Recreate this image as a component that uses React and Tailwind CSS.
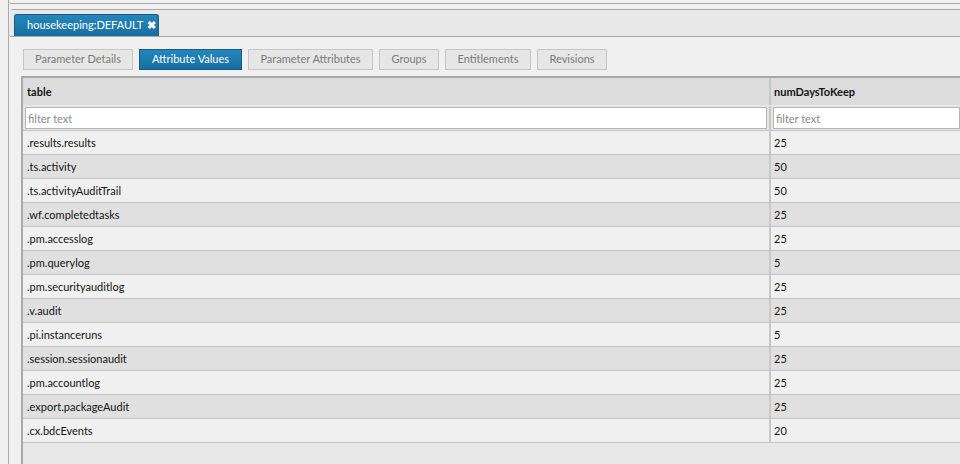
const tabs = [
  { label: 'Parameter Details', w: 'w-[110px]' },
  { label: 'Attribute Values', w: 'w-[103px]', active: true },
  { label: 'Parameter Attributes', w: 'w-[125px]' },
  { label: 'Groups', w: 'w-[60px]' },
  { label: 'Entitlements', w: 'w-[86px]' },
  { label: 'Revisions', w: 'w-[70px]' },
];

const rows = [
  ['.results.results', '25'],
  ['.ts.activity', '50'],
  ['.ts.activityAuditTrail', '50'],
  ['.wf.completedtasks', '25'],
  ['.pm.accesslog', '25'],
  ['.pm.querylog', '5'],
  ['.pm.securityauditlog', '25'],
  ['.v.audit', '25'],
  ['.pi.instanceruns', '5'],
  ['.session.sessionaudit', '25'],
  ['.pm.accountlog', '25'],
  ['.export.packageAudit', '25'],
  ['.cx.bdcEvents', '20'],
];

const font = { fontFamily: 'Lato, "Open Sans", sans-serif' };

export default function App() {
  return (
    <div
      className="w-[960px] h-[464px] overflow-hidden bg-[#f0f0f0] flex text-[11px] text-[#141414]"
      style={font}
    >
      <div className="w-[8px] shrink-0" />
      <div className="flex-1 flex flex-col border-l border-[#a9a9a9]">
        {/* bottom of the panel above */}
        <div className="h-[4px] border-b border-[#a9a9a9] rounded-bl-[3px]" />
        <div className="h-[5px]" />

        {/* main panel */}
        <div className="flex-1 flex flex-col border-t border-[#a9a9a9] rounded-tl-[3px] ml-[1px]">
          {/* tab strip */}
          <div className="h-[27px] bg-[#e8e8e8] border-b border-[#a9a9a9] flex items-end pl-[4px]">
            <div className="h-[22px] w-[145px] rounded-t-[3px] bg-gradient-to-b from-[#2586bb] to-[#16709f] border border-[#0f5f8a] border-b-0 flex items-center pl-[12px] text-white text-[11px]">
              <span className="whitespace-nowrap">housekeeping:DEFAULT</span>
              <span className="ml-[4px] -mt-[3px] text-[11px] font-bold leading-none">✖</span>
            </div>
          </div>

          {/* content */}
          <div className="flex-1 flex flex-col bg-[#f0f0f0]">
            <div className="flex gap-[6px] pl-[13px] pt-[12px]">
              {tabs.map((t) => (
                <div
                  key={t.label}
                  className={
                    t.active
                      ? `${t.w} h-[21px] flex items-center justify-center border border-[#0e5e8c] bg-gradient-to-b from-[#2586bb] to-[#16709f] text-white`
                      : `${t.w} h-[21px] flex items-center justify-center border border-[#c6c6c6] bg-[#e6e6e6] text-[#7a7a7a]`
                  }
                >
                  {t.label}
                </div>
              ))}
            </div>

            {/* table */}
            <div className="flex-1 mt-[6px] ml-[11px] border-l-[2px] border-t-[2px] border-[#a8a8a8] bg-[#e8e8e8] flex flex-col">
              <div className="flex h-[28px] bg-[#dcdcdc] border-b border-[#e8e8e8] font-bold">
                <div className="w-[748px] pl-[4px] pt-[2px] flex items-center border-r-[2px] border-[#c8c8c8]">table</div>
                <div className="flex-1 pl-[3px] pt-[2px] flex items-center">numDaysToKeep</div>
              </div>
              <div className="flex h-[25px] bg-[#e6e6e6] border-b border-[#c4c4c4]">
                <div className="w-[748px] border-r-[2px] border-[#c8c8c8] px-[2px] pt-[1px]">
                  <div className="h-[22px] bg-white border border-[#b4b4b4] flex items-center pl-[2px] pt-[2px] text-[#8a8a8a]">
                    filter text
                  </div>
                </div>
                <div className="flex-1 pl-[2px] pt-[1px]">
                  <div className="h-[22px] bg-white border border-[#b4b4b4] flex items-center pl-[2px] pt-[2px] text-[#8a8a8a]">
                    filter text
                  </div>
                </div>
              </div>
              {rows.map(([name, days], i) => (
                <div
                  key={name}
                  className={`flex h-[24px] border-b border-[#c4c4c4] ${i % 2 ? 'bg-[#e0e0e0]' : 'bg-[#f0f0f0]'}`}
                >
                  <div className="w-[748px] pl-[4px] pt-[1px] flex items-center border-r-[2px] border-[#c8c8c8]">{name}</div>
                  <div className="flex-1 pl-[3px] pt-[1px] flex items-center">{days}</div>
                </div>
              ))}
            </div>
          </div>
        </div>
      </div>
    </div>
  );
}
